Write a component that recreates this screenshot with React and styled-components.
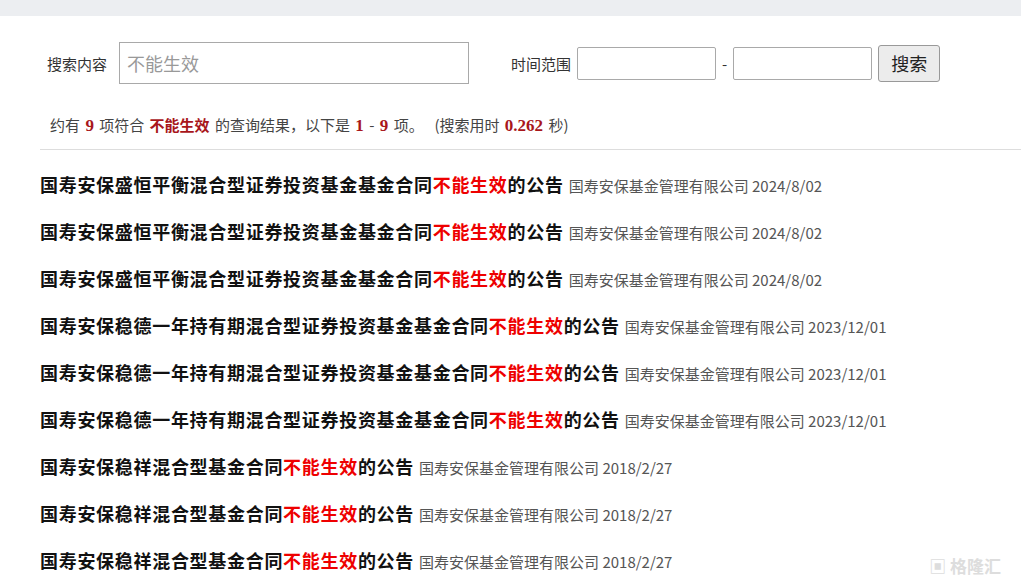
import React from 'react';
import styled, { createGlobalStyle } from 'styled-components';

const Global = createGlobalStyle`
  body { margin: 0; background: #fff; font-family: "Microsoft YaHei", "Noto Sans CJK SC", sans-serif; overflow: hidden; }
`;

const TopBar = styled.div`height: 16px; background: #eceef1;`;

const Main = styled.div`padding: 0 0 0 40px;`;

const SearchRow = styled.div`
  display: flex;
  align-items: center;
  height: 42px;
  margin-top: 26px;
  padding-left: 7px;
  font-size: 15px;
  color: #333;
`;

const Label = styled.span`margin-right: ${p => p.$gap || 12}px;`;

const Input = styled.div`
  box-sizing: border-box;
  width: ${p => p.$w}px;
  height: ${p => p.$h}px;
  border: 1px solid #a9a9a9;
  border-radius: ${p => p.$r || 0}px;
  padding-left: 7px;
  display: flex;
  align-items: center;
  font-size: 18px;
  color: #999;
`;

const Dash = styled.span`margin: 0 6px;`;

const Button = styled.div`
  box-sizing: border-box;
  margin-left: 6px;
  width: 62px;
  height: 37px;
  border: 1px solid #999;
  border-radius: 3px;
  background: #ececec;
  display: flex;
  align-items: center;
  justify-content: center;
  font-size: 18px;
  color: #222;
`;

const Summary = styled.div`
  margin-top: 30px;
  padding-left: 10px;
  font-size: 15px;
  color: #444;
  word-spacing: 2px;
  b { color: #a8161b; font-family: "Liberation Serif", "Noto Sans CJK SC", serif; font-size: 17px; }
  b.cn { font-family: "Noto Sans CJK SC", sans-serif; font-size: 15px; }
`;

const Divider = styled.div`margin-top: 13px; border-top: 1px solid #ddd;`;

const List = styled.div`padding-top: 21px;`;

const Row = styled.div`
  height: 47px;
  display: flex;
  align-items: baseline;
  white-space: nowrap;
`;

const Title = styled.span`
  font-size: 18px;
  font-weight: bold;
  color: #111;
  letter-spacing: 0.7px;
  em { font-style: normal; color: #e00; }
`;

const Meta = styled.span`
  margin-left: 5px;
  font-size: 15px;
  color: #555;
`;

const Watermark = styled.div`
  position: absolute;
  right: 20px;
  bottom: 8px;
  font-size: 17px;
  color: #ddd;
  font-weight: bold;
`;

const rows = [
  ['国寿安保盛恒平衡混合型证券投资基金基金合同', '2024/8/02'],
  ['国寿安保盛恒平衡混合型证券投资基金基金合同', '2024/8/02'],
  ['国寿安保盛恒平衡混合型证券投资基金基金合同', '2024/8/02'],
  ['国寿安保稳德一年持有期混合型证券投资基金基金合同', '2023/12/01'],
  ['国寿安保稳德一年持有期混合型证券投资基金基金合同', '2023/12/01'],
  ['国寿安保稳德一年持有期混合型证券投资基金基金合同', '2023/12/01'],
  ['国寿安保稳祥混合型基金合同', '2018/2/27'],
  ['国寿安保稳祥混合型基金合同', '2018/2/27'],
  ['国寿安保稳祥混合型基金合同', '2018/2/27'],
];

export default function App() {
  return (
    <>
      <Global />
      <TopBar />
      <Main>
        <SearchRow>
          <Label>搜索内容</Label>
          <Input $w={350} $h={42}>不能生效</Input>
          <Label style={{ marginLeft: 42 }} $gap={6}>时间范围</Label>
          <Input $w={139} $h={33} $r={2} />
          <Dash>-</Dash>
          <Input $w={139} $h={33} $r={2} />
          <Button>搜索</Button>
        </SearchRow>
        <Summary>
          约有 <b>9</b> 项符合 <b className="cn">不能生效</b> 的查询结果，以下是 <b>1</b> - <b>9</b> 项。 &nbsp;(搜索用时 <b>0.262</b> 秒)
        </Summary>
        <Divider />
        <List>
          {rows.map(([t, d], i) => (
            <Row key={i}>
              <Title>{t}<em>不能生效</em>的公告</Title>
              <Meta>国寿安保基金管理有限公司 {d}</Meta>
            </Row>
          ))}
        </List>
      </Main>
      <Watermark>▣ 格隆汇</Watermark>
    </>
  );
}
